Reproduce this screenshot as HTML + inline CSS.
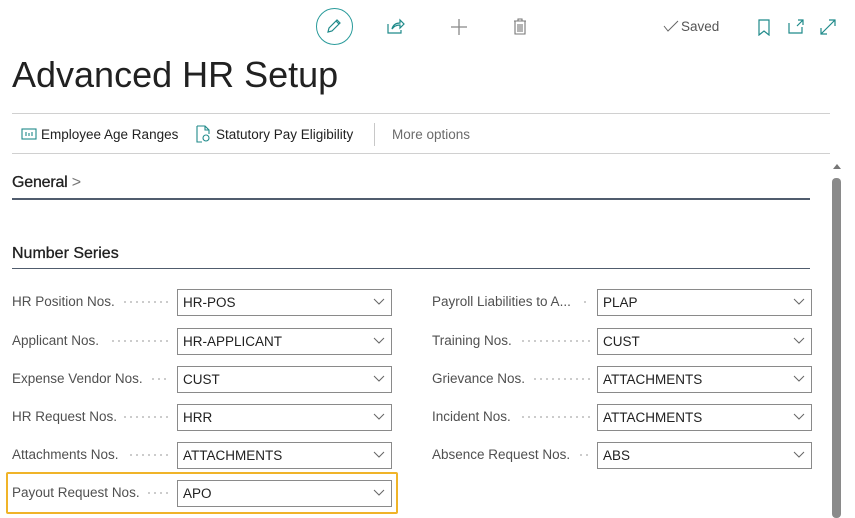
<!DOCTYPE html>
<html><head><style>
body{margin:0;width:855px;height:518px;background:#fff;font-family:"Liberation Sans",sans-serif;position:relative;overflow:hidden;color:#212121}
.a{position:absolute}
.lbl{position:absolute;font-size:13.5px;color:#505050;white-space:nowrap}
.dots{position:absolute;height:2px;background:radial-gradient(circle,#bbb 0.8px,transparent 1px) 0 0/6px 2px repeat-x}
.box{position:absolute;width:213px;height:25px;border:1px solid #8a8a8a;font-size:13.5px;line-height:25px;box-sizing:content-box}
.box span{margin-left:5px;color:#212121}
.box svg{position:absolute;right:6px;top:8px}
</style></head><body>
<div class="a" style="left:316px;top:8px;width:37px;height:37px;border:1.5px solid #2a9b9b;border-radius:50%;box-sizing:border-box"></div>
<svg class="a" style="left:325px;top:17px" width="18" height="18" viewBox="0 0 18 18" fill="none" stroke="#1f8a8a" stroke-width="1.2"><path d="M3 15l1-4 8-8 3 3-8 8z M11 4l3 3"/></svg>
<svg class="a" style="left:387px;top:18px" width="18" height="16" viewBox="0 0 18 16" fill="none" stroke="#1f8a8a" stroke-width="1.2"><path d="M1 6v9h13v-3 M5 11c1-4 4-6 8-6V2l4 4-4 4V7c-3 0-6 1-8 4z"/></svg>
<svg class="a" style="left:450px;top:18px" width="18" height="18" stroke="#888" stroke-width="1.3"><path d="M9 1v16M1 9h16"/></svg>
<svg class="a" style="left:513px;top:18px" width="14" height="17" fill="none" stroke="#777" stroke-width="1.1"><path d="M1 3h12M5 3V1h4v2M2 3v13h10V3M5 6v8M7 6v8M9 6v8"/></svg>
<svg class="a" style="left:663px;top:20px" width="16" height="12" fill="none" stroke="#666" stroke-width="1"><path d="M1 6l4 5L15 1"/></svg>
<div class="a" style="left:681px;top:19px;font-size:13.5px;color:#555">Saved</div>
<svg class="a" style="left:758px;top:19px" width="12" height="17" fill="none" stroke="#1f8a8a" stroke-width="1.2"><path d="M1 1h10v15l-5-4-5 4z"/></svg>
<svg class="a" style="left:788px;top:19px" width="17" height="15" fill="none" stroke="#1f8a8a" stroke-width="1.2"><path d="M1 4v10h13V8 M10 1h5v5M15 1l-6 6"/></svg>
<svg class="a" style="left:820px;top:19px" width="16" height="16" fill="none" stroke="#1f8a8a" stroke-width="1.2"><path d="M1 15L15 1M9 1h6v6M1 9v6h6"/></svg>
<div class="a" style="left:12px;top:54px;font-size:36px;font-weight:300;color:#212121">Advanced HR Setup</div>
<div class="a" style="left:12px;top:113px;width:818px;height:1px;background:#d0d0d0"></div>
<svg class="a" style="left:21px;top:128px" width="16" height="12" fill="none" stroke="#1f8a8a" stroke-width="1.1"><rect x="1" y="1" width="14" height="10"/><path d="M5 4v4M8 5v3M11 4v4"/></svg>
<div class="a" style="left:41px;top:127px;font-size:13.5px">Employee Age Ranges</div>
<svg class="a" style="left:196px;top:125px" width="16" height="18" fill="none" stroke="#1f8a8a" stroke-width="1.1"><path d="M1 1h8l4 4v4M1 1v16h5M9 1v4h4"/><circle cx="10" cy="13" r="3"/></svg>
<div class="a" style="left:216px;top:127px;font-size:13.5px">Statutory Pay Eligibility</div>
<div class="a" style="left:374px;top:123px;width:1px;height:23px;background:#c8c8c8"></div>
<div class="a" style="left:392px;top:127px;font-size:13.5px;color:#6b6b6b">More options</div>
<div class="a" style="left:12px;top:153px;width:818px;height:1px;background:#d0d0d0"></div>
<div class="a" style="left:12px;top:174px;font-size:16px;color:#212121;font-weight:bold;-webkit-text-stroke:0px;letter-spacing:-0.2px"><span style="font-weight:normal;-webkit-text-stroke:0.3px #212121">General</span><span style="color:#777;font-weight:normal"> &gt;</span></div>
<div class="a" style="left:12px;top:198px;width:798px;height:2px;background:#505c6d"></div>
<div class="a" style="left:12px;top:245px;font-size:16px;color:#212121;-webkit-text-stroke:0.3px #212121">Number Series</div>
<div class="a" style="left:12px;top:268px;width:798px;height:1px;background:#505c6d"></div>
<svg class="a" style="left:832px;top:162px" width="10" height="8"><path d="M1 7l4-5 4 5z" fill="#777"/></svg>
<div class="a" style="left:832px;top:178px;width:9px;height:340px;background:#8a8a8a;border-radius:4px"></div>
<div class="a" style="left:6px;top:472px;width:392px;height:42px;border:2px solid #f0b429;border-radius:2px;box-sizing:border-box"></div>

<div class="lbl" style="left:12px;top:294px">HR Position Nos.</div><div class="dots" style="left:122px;top:301px;width:48px"></div>
<div class="box" style="left:177px;top:289px"><span>HR-POS</span><svg width="12" height="8" fill="none" stroke="#666"><path d="M1 1l5 5 5-5"/></svg></div>
<div class="lbl" style="left:12px;top:333px">Applicant Nos.</div><div class="dots" style="left:110px;top:340px;width:60px"></div>
<div class="box" style="left:177px;top:328px"><span>HR-APPLICANT</span><svg width="12" height="8" fill="none" stroke="#666"><path d="M1 1l5 5 5-5"/></svg></div>
<div class="lbl" style="left:12px;top:371px">Expense Vendor Nos.</div><div class="dots" style="left:150px;top:378px;width:20px"></div>
<div class="box" style="left:177px;top:366px"><span>CUST</span><svg width="12" height="8" fill="none" stroke="#666"><path d="M1 1l5 5 5-5"/></svg></div>
<div class="lbl" style="left:12px;top:409px">HR Request Nos.</div><div class="dots" style="left:122px;top:416px;width:48px"></div>
<div class="box" style="left:177px;top:404px"><span>HRR</span><svg width="12" height="8" fill="none" stroke="#666"><path d="M1 1l5 5 5-5"/></svg></div>
<div class="lbl" style="left:12px;top:447px">Attachments Nos.</div><div class="dots" style="left:128px;top:454px;width:42px"></div>
<div class="box" style="left:177px;top:442px"><span>ATTACHMENTS</span><svg width="12" height="8" fill="none" stroke="#666"><path d="M1 1l5 5 5-5"/></svg></div>
<div class="lbl" style="left:12px;top:485px">Payout Request Nos.</div><div class="dots" style="left:146px;top:492px;width:24px"></div>
<div class="box" style="left:177px;top:480px"><span>APO</span><svg width="12" height="8" fill="none" stroke="#666"><path d="M1 1l5 5 5-5"/></svg></div>

<div class="lbl" style="left:432px;top:294px">Payroll Liabilities to A...</div><div class="dots" style="left:582px;top:301px;width:8px"></div>
<div class="box" style="left:597px;top:289px"><span>PLAP</span><svg width="12" height="8" fill="none" stroke="#666"><path d="M1 1l5 5 5-5"/></svg></div>
<div class="lbl" style="left:432px;top:333px">Training Nos.</div><div class="dots" style="left:520px;top:340px;width:70px"></div>
<div class="box" style="left:597px;top:328px"><span>CUST</span><svg width="12" height="8" fill="none" stroke="#666"><path d="M1 1l5 5 5-5"/></svg></div>
<div class="lbl" style="left:432px;top:371px">Grievance Nos.</div><div class="dots" style="left:532px;top:378px;width:58px"></div>
<div class="box" style="left:597px;top:366px"><span>ATTACHMENTS</span><svg width="12" height="8" fill="none" stroke="#666"><path d="M1 1l5 5 5-5"/></svg></div>
<div class="lbl" style="left:432px;top:409px">Incident Nos.</div><div class="dots" style="left:520px;top:416px;width:70px"></div>
<div class="box" style="left:597px;top:404px"><span>ATTACHMENTS</span><svg width="12" height="8" fill="none" stroke="#666"><path d="M1 1l5 5 5-5"/></svg></div>
<div class="lbl" style="left:432px;top:447px">Absence Request Nos.</div><div class="dots" style="left:578px;top:454px;width:12px"></div>
<div class="box" style="left:597px;top:442px"><span>ABS</span><svg width="12" height="8" fill="none" stroke="#666"><path d="M1 1l5 5 5-5"/></svg></div>
</body></html>
